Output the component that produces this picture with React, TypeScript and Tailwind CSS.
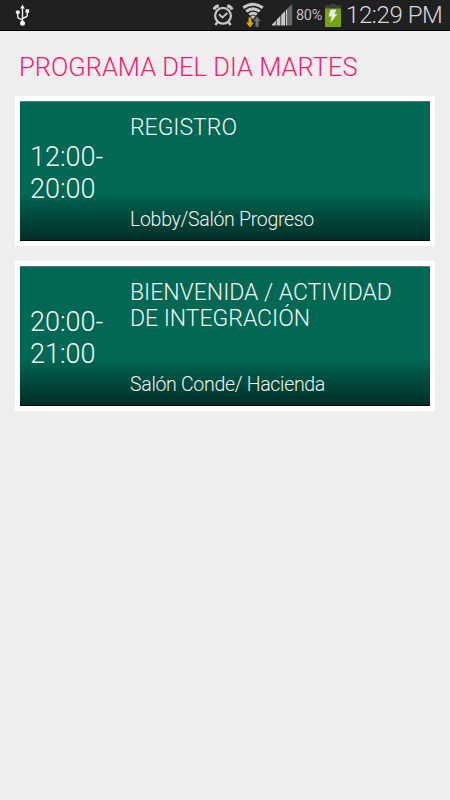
type Session = { time: string[]; title: string[]; place: string };

const sessions: Session[] = [
  { time: ['12:00-', '20:00'], title: ['REGISTRO'], place: 'Lobby/Salón Progreso' },
  {
    time: ['20:00-', '21:00'],
    title: ['BIENVENIDA / ACTIVIDAD', 'DE INTEGRACIÓN'],
    place: 'Salón Conde/ Hacienda',
  },
];

function UsbIcon() {
  return (
    <svg className="ml-[15px] h-[24px] w-[16px]" viewBox="0 0 16 24" fill="none" stroke="#efefef" strokeWidth="1.4">
      <path d="M7.5 5v15M2.7 11v2.5q0 1.5 1.5 2l3.3 1.7M12.3 9v3q0 1.5-1.5 2l-3.3 1.5" />
      <path d="M7.5 1.5l2.3 4H5.2zM10.5 6.3h3.6v3.5h-3.6z" fill="#efefef" stroke="none" />
      <circle cx="2.8" cy="9.3" r="2" fill="#efefef" stroke="none" />
      <circle cx="7.5" cy="20.2" r="2.5" fill="#efefef" stroke="none" />
    </svg>
  );
}

function AlarmIcon() {
  return (
    <svg className="h-[24px] w-[22px]" viewBox="0 0 22 24" fill="none" stroke="#c4c4c4">
      <circle cx="11" cy="12.8" r="7.9" strokeWidth="2.3" />
      <path d="M7 11.3l3.4 3.2 5-4.5" strokeWidth="2" />
      <path d="M1.9 6.5Q3 3.4 6.8 2.7M20.1 6.5Q19 3.4 15.2 2.7" strokeWidth="3" />
      <path d="M5.6 19l-2.3 3M16.4 19l2.3 3" strokeWidth="2.5" />
    </svg>
  );
}

function WifiIcon() {
  return (
    <svg className="ml-[8px] h-[26px] w-[22px]" viewBox="0 0 22 26" fill="none" stroke="#c8c8c8" strokeWidth="3">
      <path d="M1.2 5.8Q11-1.4 20.8 5.8M4.2 9.4q6.8-5 13.6 0M7.2 12.6q3.8-2.8 7.6 0" />
      <path d="M8.6 14.4q2.4-1.8 4.8 0L11 17z" fill="#c8c8c8" stroke="none" />
      <path d="M6.5 15.5h3v5H12l-4 5-4-5h2.5z" fill="#d9a900" stroke="none" />
      <path d="M15 14.5l3.7 4.6h-2.2v5.6h-3v-5.6h-2.2z" fill="#777777" stroke="none" />
    </svg>
  );
}

function SignalIcon() {
  return (
    <svg className="ml-[8px] h-[22px] w-[21px]" viewBox="0 0 21 22">
      <path d="M0 21.5v-1l3.8-4v5zM4.6 21.5v-5.8l3.8-4v9.8zM9.2 21.5V11L13 7v14.5zM13.8 21.5V6.3l1.7-1.8v17z" fill="#c8c8c8" />
      <path d="M15.5 21.5v-17L20.2 0v21.5z" fill="#666666" />
    </svg>
  );
}

function BatteryIcon() {
  return (
    <svg className="ml-[2px] h-[23px] w-[16px]" viewBox="0 0 16 23">
      <path d="M5 0h6v3H5z" fill="#3c3c3c" />
      <path d="M0 1.5h16V5H0z" fill="#3f423a" />
      <path d="M0 4.5h16V23H0z" fill="#73a510" />
      <path d="M5.5 5.5h6L9.5 10h3L5.3 19l1.4-6.5H3.5z" fill="#e8e8e8" />
    </svg>
  );
}

function SessionCard({ time, title, place }: Session) {
  return (
    <article className="h-[150px] bg-white p-[5px]">
      <div className="flex h-full border-t border-b border-t-[#558074] border-b-black bg-linear-to-b from-[#006853] from-66% to-[#002f27] text-[#f4f4f4]">
        <div className="w-[110px] pt-[39px] pl-[10px] text-[27px] leading-[32px] font-light">
          {time.map((line) => (
            <div key={line}>{line}</div>
          ))}
        </div>
        <div className="flex flex-1 flex-col justify-between pt-[13px] pb-[8px]">
          <h2 className="text-[23px] leading-[26px] font-light tracking-[-0.02px]">
            {title.map((line) => (
              <div key={line}>{line}</div>
            ))}
          </h2>
          <p className="text-[19.5px] leading-[24px] font-light tracking-[-0.3px]">{place}</p>
        </div>
      </div>
    </article>
  );
}

export default function App() {
  return (
    <div className="h-[800px] w-[450px] bg-[#eeeeee] font-['Roboto',sans-serif]">
      <header className="flex h-[31px] items-center border-b border-black bg-[#202020] text-[#bebebe]">
        <UsbIcon />
        <div className="ml-auto flex items-center">
          <AlarmIcon />
          <WifiIcon />
          <SignalIcon />
          <span className="ml-[3px] w-[27px] pt-[2px] text-[14.5px] tracking-[-0.3px]">80%</span>
          <BatteryIcon />
        </div>
        <span className="ml-[5px] w-[104px] text-[24px] leading-[30px] font-light tracking-[-0.4px] whitespace-nowrap text-[#d8d8d8]">
          12:29 PM
        </span>
      </header>
      <main className="px-[15px]">
        <h1 className="h-[65px] pt-[21px] pl-[4px] text-[25.5px] leading-[30px] font-light tracking-[0.02px] text-[#ff176f]">
          PROGRAMA DEL DIA MARTES
        </h1>
        <div className="flex flex-col gap-[15px]">
          {sessions.map((s) => (
            <SessionCard key={s.place} {...s} />
          ))}
        </div>
      </main>
    </div>
  );
}
